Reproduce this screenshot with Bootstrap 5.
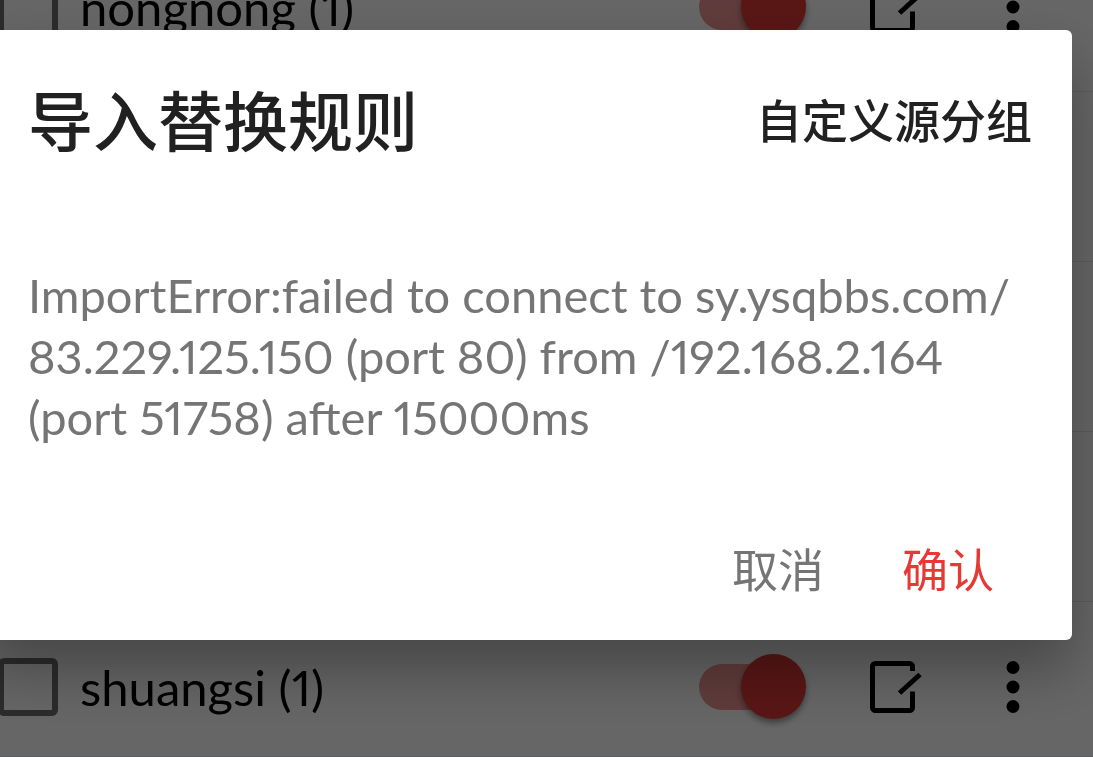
<!doctype html>
<html lang="zh-CN">
<head>
<meta charset="utf-8">
<meta name="viewport" content="width=device-width, initial-scale=1">
<title>导入替换规则</title>
<link href="https://cdn.jsdelivr.net/npm/bootstrap@5.3.0/dist/css/bootstrap.min.css" rel="stylesheet">
<script defer src="https://cdn.jsdelivr.net/npm/bootstrap@5.3.0/dist/js/bootstrap.bundle.min.js"></script>
<style>
  body {
    font-family: Lato, "Noto Sans CJK SC", sans-serif;
    font-size: 47px;
    line-height: 61px;
    font-variant-numeric: proportional-nums;
    background: #fff;
  }
  /* the list is scrolled part of the way into its first row */
  .rule-list { margin-top: -78px; }
  .rule-row { height: 170px; color: #000; border-bottom: 1px solid #e4e4e4; }
  .rule-check {
    appearance: none;
    width: 60px;
    height: 58px;
    margin-left: -2px;
    border: 6px solid #6d6d6d;
    border-radius: 6px;
  }
  .rule-name { margin-left: 22px; padding-top: 2px; font-size: 49px; }
  .rule-switch {
    appearance: none;
    width: 100px;
    height: 46px;
    margin-right: 71px;
    border-radius: 23px;
    background: #ee9794;
  }
  .rule-switch::before {
    content: "";
    display: block;
    width: 65px;
    height: 65px;
    margin: -10px 0 0 42px;
    border-radius: 50%;
    background: #dd3936;
    box-shadow: 0 4px 6px rgba(0, 0, 0, .4);
  }
  .icon-btn { border: 0; padding: 0; background: none; color: #000; line-height: 0; }
  .edit-btn { margin-right: 84px; }
  .more-btn { margin-right: 73px; }

  .scrim { background: rgba(0, 0, 0, .6); }
  .import-dialog {
    max-width: none;
    margin: 30px 21px 0 -20px;
  }
  .import-dialog .modal-content {
    border: 0;
    border-radius: 6px;
    padding: 0 40px 0 48px;
    box-shadow: 0 30px 60px rgba(0, 0, 0, .32);
  }
  .import-title { font-size: 65px; line-height: 90px; font-weight: 500; color: #212121; }
  .dialog-head { padding: 46px 0 42px; }
  .group-btn, .action-btn { border: 0; padding: 0; background: none; font-size: 46px; line-height: 66px; }
  .group-btn { font-weight: 500; color: #212121; }
  .import-message { margin: 57px 0 0; color: #757575; }
  .dialog-actions { gap: 78px; padding: 89px 38px 37px 0; }
  .cancel-btn { color: #757575; }
  .ok-btn { color: #e53935; }
</style>
</head>
<body class="vh-100 overflow-hidden">

<svg class="d-none" xmlns="http://www.w3.org/2000/svg">
  <symbol id="icon-edit" viewBox="0 0 52 52">
    <g fill="none" stroke="currentColor" stroke-width="5">
      <path d="M42.500 10V5.500a3 3 0 0 0-3-3h-34a3 3 0 0 0-3 3v41a3 3 0 0 0 3 3h34a3 3 0 0 0 3-3V30.500"/>
      <path d="M29.500 32L50 13.500"/>
    </g>
  </symbol>
  <symbol id="icon-more" viewBox="0 0 14 52">
    <circle cx="7" cy="6.500" r="6.500"/><circle cx="7" cy="26" r="6.500"/><circle cx="7" cy="45.500" r="6.500"/>
  </symbol>
</svg>

<main class="vh-100 overflow-hidden d-flex flex-column border-bottom border-secondary-subtle">
  <div class="rule-list">
    <div class="rule-row d-flex align-items-center">
      <input class="rule-check flex-shrink-0" type="checkbox" id="rule-nongnong">
      <label class="rule-name flex-fill" for="rule-nongnong">nongnong (1)</label>
      <input class="rule-switch flex-shrink-0" type="checkbox" role="switch" aria-label="启用 nongnong" checked>
      <button class="icon-btn edit-btn" type="button" aria-label="编辑"><svg width="52" height="52"><use href="#icon-edit"/></svg></button>
      <button class="icon-btn more-btn" type="button" aria-label="更多"><svg width="14" height="52"><use href="#icon-more"/></svg></button>
    </div>
    <div class="rule-row"></div>
    <div class="rule-row"></div>
    <div class="rule-row"></div>
    <div class="rule-row d-flex align-items-center">
      <input class="rule-check flex-shrink-0" type="checkbox" id="rule-shuangsi">
      <label class="rule-name flex-fill" for="rule-shuangsi">shuangsi (1)</label>
      <input class="rule-switch flex-shrink-0" type="checkbox" role="switch" aria-label="启用 shuangsi" checked>
      <button class="icon-btn edit-btn" type="button" aria-label="编辑"><svg width="52" height="52"><use href="#icon-edit"/></svg></button>
      <button class="icon-btn more-btn" type="button" aria-label="更多"><svg width="14" height="52"><use href="#icon-more"/></svg></button>
    </div>
  </div>
</main>

<div class="modal d-block scrim overflow-hidden" tabindex="-1" role="dialog" aria-modal="true" aria-labelledby="import-title">
  <div class="modal-dialog import-dialog">
    <div class="modal-content">
      <div class="dialog-head d-flex align-items-center justify-content-between">
        <h1 class="import-title m-0" id="import-title">导入替换规则</h1>
        <button class="group-btn" type="button">自定义源分组</button>
      </div>
      <p class="import-message">ImportError:failed to connect to sy.ysqbbs.com/<wbr>83.229.125.150 (port 80) from /192.168.2.164 (port&nbsp;51758) after 15000ms</p>
      <div class="dialog-actions d-flex justify-content-end">
        <button class="action-btn cancel-btn" type="button">取消</button>
        <button class="action-btn ok-btn" type="button">确认</button>
      </div>
    </div>
  </div>
</div>
</body>
</html>
